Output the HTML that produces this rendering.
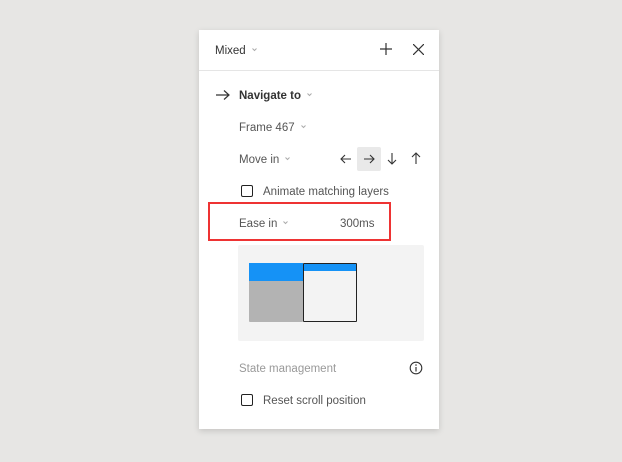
<!DOCTYPE html>
<html><head><style>
body{margin:0;width:622px;height:462px;background:#e7e6e4;font-family:"Liberation Sans",sans-serif;position:relative;overflow:hidden}
.p{position:absolute;left:199px;top:30px;width:240px;height:399px;background:#fff;box-shadow:0 2px 6px rgba(0,0,0,.15)}
.t{position:absolute;font-size:11.5px;color:#333;white-space:nowrap;margin-top:1px}
.g{color:#555}
.c{display:inline-block;width:7px;height:5px;margin-left:5px;vertical-align:2px}
.cb{position:absolute;width:10px;height:10px;border:1.3px solid #222;border-radius:2px}
</style></head><body>
<div class="p">
<div class="t" style="left:16px;top:14px;color:#333">Mixed<svg class="c" viewBox="0 0 7 5"><path d="M1.5 1.5L3.5 3.5L5.5 1.5" stroke="#aaa" fill="none"/></svg></div>
<svg style="position:absolute;left:181px;top:13px" width="12" height="12"><path d="M6 0V12M0 6H12" stroke="#333" stroke-width="1.2"/></svg>
<svg style="position:absolute;left:214px;top:14px" width="11" height="11"><path d="M0 0L11 11M11 0L0 11" stroke="#333" stroke-width="1.2"/></svg>
<div style="position:absolute;left:0;top:40px;width:240px;height:1px;background:#e5e5e5"></div>
<svg style="position:absolute;left:17px;top:60px" width="14" height="10"><path d="M0 5H13M8 0.5L13 5L8 9.5" stroke="#333" stroke-width="1.2" fill="none"/></svg>
<div class="t" style="left:40px;top:59px;font-weight:bold;color:#333">Navigate to<svg class="c" viewBox="0 0 7 5"><path d="M1.5 1.5L3.5 3.5L5.5 1.5" stroke="#aaa" fill="none"/></svg></div>
<div class="t g" style="left:40px;top:91px">Frame 467<svg class="c" viewBox="0 0 7 5"><path d="M1.5 1.5L3.5 3.5L5.5 1.5" stroke="#aaa" fill="none"/></svg></div>
<div class="t g" style="left:40px;top:123px">Move in<svg class="c" viewBox="0 0 7 5"><path d="M1.5 1.5L3.5 3.5L5.5 1.5" stroke="#aaa" fill="none"/></svg></div>
<div style="position:absolute;left:158px;top:117px;width:24px;height:24px;background:#e9e9e9;border-radius:2px"></div>
<svg style="position:absolute;left:141px;top:124px" width="12" height="10"><path d="M11 5H1M5 1L1 5L5 9" stroke="#333" stroke-width="1.1" fill="none"/></svg>
<svg style="position:absolute;left:164px;top:124px" width="12" height="10"><path d="M1 5H11M7 1L11 5L7 9" stroke="#333" stroke-width="1.1" fill="none"/></svg>
<svg style="position:absolute;left:188px;top:123px" width="10" height="12"><path d="M5 0V11M1 7L5 11L9 7" stroke="#333" stroke-width="1.1" fill="none"/></svg>
<svg style="position:absolute;left:212px;top:122px" width="10" height="12"><path d="M5 12V1M1 5L5 1L9 5" stroke="#333" stroke-width="1.1" fill="none"/></svg>
<div class="cb" style="left:42px;top:155px"></div>
<div class="t g" style="left:64px;top:155px">Animate matching layers</div>
<div style="position:absolute;left:9px;top:172px;width:179px;height:35px;border:2px solid #ee3333"></div>
<div class="t g" style="left:40px;top:187px">Ease in<svg class="c" viewBox="0 0 7 5"><path d="M1.5 1.5L3.5 3.5L5.5 1.5" stroke="#aaa" fill="none"/></svg></div>
<div class="t g" style="left:141px;top:187px">300ms</div>
<div style="position:absolute;left:39px;top:215px;width:186px;height:96px;background:#f3f3f3;border-radius:2px"></div>
<div style="position:absolute;left:50px;top:233px;width:54px;height:59px;background:#b3b3b3;border-radius:1px"></div>
<div style="position:absolute;left:50px;top:233px;width:54px;height:18px;background:#1592f6"></div>
<div style="position:absolute;left:104px;top:233px;width:52px;height:57px;background:#f3f3f3;border:1px solid #222;border-radius:1px"></div>
<div style="position:absolute;left:105px;top:234px;width:52px;height:7px;background:#1592f6"></div>
<div class="t" style="left:40px;top:332px;color:#999">State management</div>
<svg style="position:absolute;left:210px;top:331px" width="14" height="14"><circle cx="7" cy="7" r="5.8" stroke="#333" stroke-width="1.1" fill="none"/><path d="M7 6V10.5" stroke="#333" stroke-width="1.2"/><circle cx="7" cy="4" r=".8" fill="#333"/></svg>
<div class="cb" style="left:42px;top:364px"></div>
<div class="t g" style="left:64px;top:364px">Reset scroll position</div>
</div>
</body></html>
